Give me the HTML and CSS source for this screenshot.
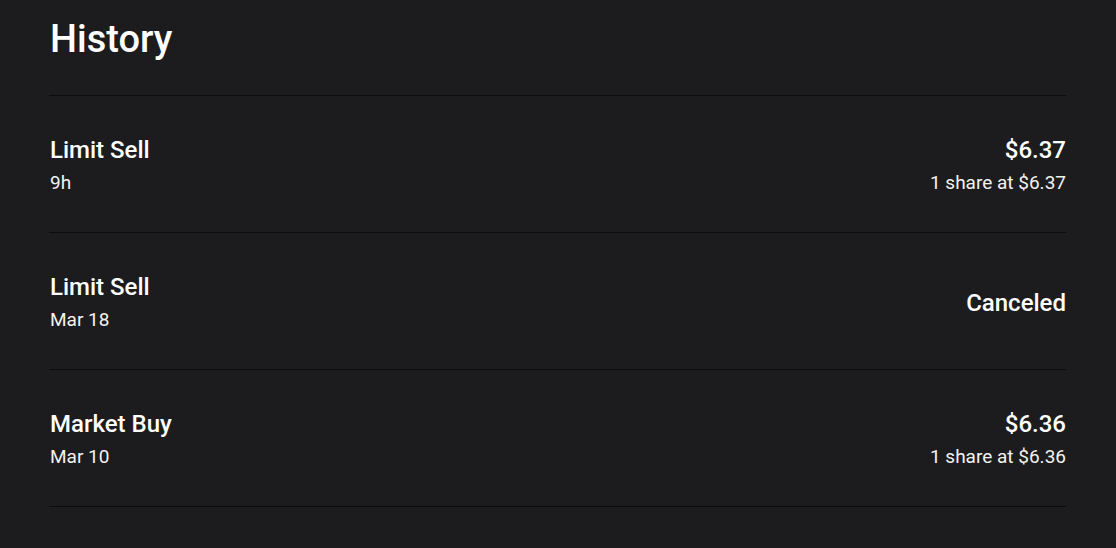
FILE: index.html
```html
<!DOCTYPE html>
<html lang="en">
<head>
<meta charset="utf-8">
<title>History</title>
<link rel="stylesheet" href="styles.css">
</head>
<body>
<main class="history">
  <h1 class="history-title">History</h1>
  <ul class="order-list">
    <li class="order">
      <div class="order-left">
        <div class="order-name">Limit Sell</div>
        <div class="order-sub">9h</div>
      </div>
      <div class="order-right">
        <div class="order-amount">$6.37</div>
        <div class="order-sub">1 share at $6.37</div>
      </div>
    </li>
    <li class="order">
      <div class="order-left">
        <div class="order-name">Limit Sell</div>
        <div class="order-sub">Mar 18</div>
      </div>
      <div class="order-right">
        <div class="order-amount">Canceled</div>
      </div>
    </li>
    <li class="order">
      <div class="order-left">
        <div class="order-name">Market Buy</div>
        <div class="order-sub">Mar 10</div>
      </div>
      <div class="order-right">
        <div class="order-amount">$6.36</div>
        <div class="order-sub">1 share at $6.36</div>
      </div>
    </li>
  </ul>
</main>
</body>
</html>
```

FILE: styles.css
```css
html, body {
  margin: 0;
  padding: 0;
  background: #1c1c1e;
  color: #ffffff;
  font-family: Roboto, "Liberation Sans", sans-serif;
}

.history {
  width: 1017px;
  padding: 15px 0 0 49px;
}

.history-title {
  margin: 0 0 32px 1px;
  font-size: 38px;
  line-height: 48px;
  font-weight: 500;
  color: #ffffff;
}

.order-list {
  list-style: none;
  margin: 0;
  padding: 0;
  border-top: 1px solid #0c0c0d;
}

.order {
  display: flex;
  justify-content: space-between;
  align-items: center;
  padding: 40px 0 37px 1px;
  border-bottom: 1px solid #0c0c0d;
}

.order-left, .order-right {
  display: flex;
  flex-direction: column;
  gap: 7px;
}

.order-right {
  align-items: flex-end;
}

.order-name, .order-amount {
  font-size: 24px;
  line-height: 28px;
  font-weight: 500;
}

.order-sub {
  font-size: 19px;
  line-height: 24px;
  font-weight: 400;
  color: #f2f2f2;
}
```
